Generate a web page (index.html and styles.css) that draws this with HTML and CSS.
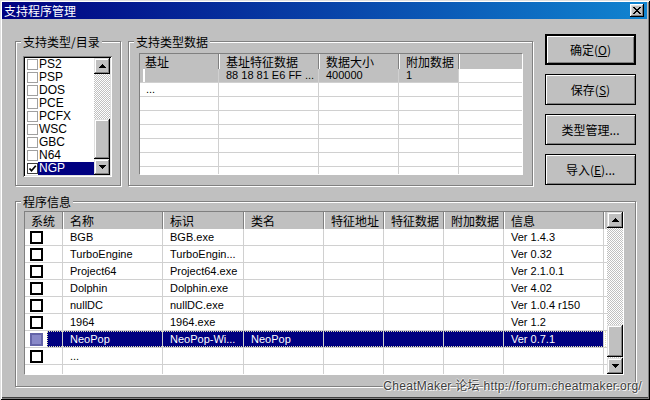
FILE: index.html
```html
<!DOCTYPE html>
<html lang="zh-CN">
<head>
<meta charset="utf-8">
<title>支持程序管理</title>
<link rel="stylesheet" href="styles.css">
</head>
<body>
<div class="window">
  <div class="titlebar">
    <span class="title">支持程序管理</span>
    <span class="close"><svg width="8" height="7" viewBox="0 0 8 7" shape-rendering="crispEdges"><path d="M0 0h2v1H0zM6 0h2v1H6zM1 1h2v1H1zM5 1h2v1H5zM2 2h4v1H2zM3 3h2v1H3zM2 4h4v1H2zM1 5h2v1H1zM5 5h2v1H5zM0 6h2v1H0zM6 6h2v1H6z" fill="#000"/></svg></span>
  </div>
  <div class="content">
    <div class="top">
      <div class="group g1">
        <span class="glabel">支持类型/目录</span>
        <div class="listbox">
          <div class="lb-items">
            <div class="lb-item"><span class="lb-cb"></span><span class="lb-text">PS2</span></div>
            <div class="lb-item"><span class="lb-cb"></span><span class="lb-text">PSP</span></div>
            <div class="lb-item"><span class="lb-cb"></span><span class="lb-text">DOS</span></div>
            <div class="lb-item"><span class="lb-cb"></span><span class="lb-text">PCE</span></div>
            <div class="lb-item"><span class="lb-cb"></span><span class="lb-text">PCFX</span></div>
            <div class="lb-item"><span class="lb-cb"></span><span class="lb-text">WSC</span></div>
            <div class="lb-item"><span class="lb-cb"></span><span class="lb-text">GBC</span></div>
            <div class="lb-item"><span class="lb-cb"></span><span class="lb-text">N64</span></div>
            <div class="lb-item sel"><span class="lb-cb checked"><svg width="9" height="9" viewBox="0 0 9 9"><polyline points="1.5,4.5 3.5,6.8 7.8,1.8" fill="none" stroke="#000" stroke-width="1.7"/></svg></span><span class="lb-text">NGP</span></div>
          </div>
          <div class="sb sb-lb">
            <div class="sb-btn"><svg width="7" height="4" viewBox="0 0 7 4" shape-rendering="crispEdges"><path d="M3 0h1v1h1v1h1v1h1v1H0V3h1V2h1V1h1z" fill="#000"/></svg></div>
            <div class="sb-track lb-track1"></div>
            <div class="sb-btn lb-thumb"></div>
            <div class="sb-btn"><svg width="7" height="4" viewBox="0 0 7 4" shape-rendering="crispEdges"><path d="M0 0h7v1H6v1H5v1H4v1H3V3H2V2H1V1H0z" fill="#000"/></svg></div>
          </div>
        </div>
      </div>
      <div class="group g2">
        <span class="glabel">支持类型数据</span>
        <div class="lv lv1">
          <div class="lv-head cols1">
            <div class="hcell">基址</div>
            <div class="hcell">基址特征数据</div>
            <div class="hcell">数据大小</div>
            <div class="hcell">附加数据</div>
            <div class="hcell filler"></div>
          </div>
          <div class="lv-row r1 cols1 gray">
            <div class="cell first"></div>
            <div class="cell">88 18 81 E6 FF ...</div>
            <div class="cell">400000</div>
            <div class="cell">1</div>
            <div class="cell filler"></div>
          </div>
          <div class="lv-row r1 cols1"><div class="cell">...</div><div class="cell"></div><div class="cell"></div><div class="cell"></div><div class="cell filler"></div></div>
          <div class="lv-row r1 cols1"><div class="cell"></div><div class="cell"></div><div class="cell"></div><div class="cell"></div><div class="cell filler"></div></div>
          <div class="lv-row r1 cols1"><div class="cell"></div><div class="cell"></div><div class="cell"></div><div class="cell"></div><div class="cell filler"></div></div>
          <div class="lv-row r1 cols1"><div class="cell"></div><div class="cell"></div><div class="cell"></div><div class="cell"></div><div class="cell filler"></div></div>
          <div class="lv-row r1 cols1"><div class="cell"></div><div class="cell"></div><div class="cell"></div><div class="cell"></div><div class="cell filler"></div></div>
          <div class="lv-row r1 cols1"><div class="cell"></div><div class="cell"></div><div class="cell"></div><div class="cell"></div><div class="cell filler"></div></div>
          <div class="lv-row r1 cols1"><div class="cell"></div><div class="cell"></div><div class="cell"></div><div class="cell"></div><div class="cell filler"></div></div>
        </div>
      </div>
      <div class="buttons">
        <div class="btn default">确定(<u>O</u>)</div>
        <div class="btn">保存(<u>S</u>)</div>
        <div class="btn">类型管理...</div>
        <div class="btn">导入(<u>E</u>)...</div>
      </div>
    </div>
    <div class="group g3">
      <span class="glabel">程序信息</span>
      <div class="lv lv3">
        <div class="lv-main">
          <div class="lv-head cols3">
            <div class="hcell">系统</div>
            <div class="hcell">名称</div>
            <div class="hcell">标识</div>
            <div class="hcell">类名</div>
            <div class="hcell">特征地址</div>
            <div class="hcell">特征数据</div>
            <div class="hcell">附加数据</div>
            <div class="hcell">信息</div>
            <div class="hcell filler"></div>
          </div>
          <div class="lv-row r3 cols3"><div class="cell c0"><span class="cb3"></span></div><div class="cell">BGB</div><div class="cell">BGB.exe</div><div class="cell"></div><div class="cell"></div><div class="cell"></div><div class="cell"></div><div class="cell">Ver 1.4.3</div><div class="cell filler"></div></div>
          <div class="lv-row r3 cols3"><div class="cell c0"><span class="cb3"></span></div><div class="cell">TurboEngine</div><div class="cell">TurboEngin...</div><div class="cell"></div><div class="cell"></div><div class="cell"></div><div class="cell"></div><div class="cell">Ver 0.32</div><div class="cell filler"></div></div>
          <div class="lv-row r3 cols3"><div class="cell c0"><span class="cb3"></span></div><div class="cell">Project64</div><div class="cell">Project64.exe</div><div class="cell"></div><div class="cell"></div><div class="cell"></div><div class="cell"></div><div class="cell">Ver 2.1.0.1</div><div class="cell filler"></div></div>
          <div class="lv-row r3 cols3"><div class="cell c0"><span class="cb3"></span></div><div class="cell">Dolphin</div><div class="cell">Dolphin.exe</div><div class="cell"></div><div class="cell"></div><div class="cell"></div><div class="cell"></div><div class="cell">Ver 4.02</div><div class="cell filler"></div></div>
          <div class="lv-row r3 cols3"><div class="cell c0"><span class="cb3"></span></div><div class="cell">nullDC</div><div class="cell">nullDC.exe</div><div class="cell"></div><div class="cell"></div><div class="cell"></div><div class="cell"></div><div class="cell">Ver 1.0.4 r150</div><div class="cell filler"></div></div>
          <div class="lv-row r3 cols3"><div class="cell c0"><span class="cb3"></span></div><div class="cell">1964</div><div class="cell">1964.exe</div><div class="cell"></div><div class="cell"></div><div class="cell"></div><div class="cell"></div><div class="cell">Ver 1.2</div><div class="cell filler"></div></div>
          <div class="lv-row r3 cols3 sel"><div class="cell c0"><span class="cb3"></span></div><div class="cell">NeoPop</div><div class="cell">NeoPop-Wi...</div><div class="cell">NeoPop</div><div class="cell"></div><div class="cell"></div><div class="cell"></div><div class="cell">Ver 0.7.1</div><div class="cell filler"></div></div>
          <div class="lv-row r3 cols3"><div class="cell c0"><span class="cb3"></span></div><div class="cell">...</div><div class="cell"></div><div class="cell"></div><div class="cell"></div><div class="cell"></div><div class="cell"></div><div class="cell"></div><div class="cell filler"></div></div>
          <div class="lv-row r3 cols3"><div class="cell c0"></div><div class="cell"></div><div class="cell"></div><div class="cell"></div><div class="cell"></div><div class="cell"></div><div class="cell"></div><div class="cell"></div><div class="cell filler"></div></div>
        </div>
        <div class="sb sb-lv">
          <div class="sb-btn"><svg width="7" height="4" viewBox="0 0 7 4" shape-rendering="crispEdges"><path d="M3 0h1v1h1v1h1v1h1v1H0V3h1V2h1V1h1z" fill="#000"/></svg></div>
          <div class="sb-track lv-track1"></div>
          <div class="sb-btn lv-thumb"></div>
          <div class="sb-track lv-track2"></div>
          <div class="sb-btn"><svg width="7" height="4" viewBox="0 0 7 4" shape-rendering="crispEdges"><path d="M0 0h7v1H6v1H5v1H4v1H3V3H2V2H1V1H0z" fill="#000"/></svg></div>
        </div>
      </div>
    </div>
  </div>
  <div class="watermark">CheatMaker 论坛 http://forum.cheatmaker.org/</div>
</div>
</body>
</html>
```
FILE: styles.css
```css
* { box-sizing: border-box; }
body {
  margin: 0;
  background: #c0c0c0;
  font-family: "Liberation Sans", "Noto Sans CJK SC", sans-serif;
  color: #000;
}
.window {
  position: relative;
  width: 650px;
  height: 400px;
  overflow: hidden;
  background: #c0c0c0;
  padding: 2px 3px 4px 2px;
  box-shadow: inset 1px 1px 0 #dfdfdf, inset -1px -1px 0 #000,
              inset 2px 2px 0 #fff, inset -2px -2px 0 #808080,
              inset 0 -3px 0 #404040;
}
.titlebar {
  height: 17px;
  display: flex;
  align-items: center;
  justify-content: space-between;
  padding: 0 3px 0 2px;
  background: linear-gradient(to right, #000080, #1084d0);
}
.title {
  color: #fff;
  font: 12px/17px "Noto Sans CJK SC", sans-serif;
}
.close {
  width: 14px;
  height: 13px;
  display: flex;
  align-items: center;
  justify-content: center;
  padding: 0 1px 1px 0;
  background: #c0c0c0;
  box-shadow: inset -1px -1px 0 #000, inset 1px 1px 0 #fff,
              inset -2px -2px 0 #808080, inset 2px 2px 0 #dfdfdf;
}
.close svg { display: block; }

.content { padding: 15px 0 0 13px; }
.top { display: flex; align-items: flex-start; }

.group {
  position: relative;
  border: 1px solid #808080;
  box-shadow: inset 1px 1px 0 #fff, 1px 1px 0 #fff;
}
.glabel {
  position: absolute;
  top: -7px;
  left: 5px;
  padding: 0 2px;
  background: #c0c0c0;
  font: 12px/13px "Noto Sans CJK SC", sans-serif;
  white-space: nowrap;
}
.g1 { width: 106px; height: 145px; margin-top: 7px; padding: 14px 0 0 7px; }
.g2 { width: 405px; height: 145px; margin: 7px 0 0 7px; padding: 11px 0 0 10px; }
.g3 { width: 621px; height: 186px; margin-top: 15px; padding: 9px 0 0 8px; }

/* list box */
.listbox {
  width: 89px;
  height: 121px;
  padding: 2px;
  display: flex;
  background: #fff;
  box-shadow: inset 1px 1px 0 #808080, inset -1px -1px 0 #fff,
              inset 2px 2px 0 #000, inset -2px -2px 0 #dfdfdf;
}
.lb-items { flex: 1; display: flex; flex-direction: column; }
.lb-item {
  height: 13px;
  display: flex;
  align-items: center;
  font: 12px/13px "Liberation Sans Narrow", "Liberation Sans", sans-serif;
}
.lb-cb {
  flex: none;
  width: 11px;
  height: 11px;
  margin-left: 2px;
  border: 1px solid #a0a0a0;
  background: #fff;
  display: flex;
  align-items: center;
  justify-content: center;
}
.lb-cb.checked { border-color: #404040; }
.lb-cb svg { display: block; }
.lb-text { flex: 1; height: 13px; padding-left: 1px; }
.lb-item.sel .lb-text { background: #000080; color: #fff; }

/* scrollbars */
.sb { width: 16px; flex: none; display: flex; flex-direction: column; }
.sb-btn {
  flex: none;
  height: 16px;
  display: flex;
  align-items: center;
  justify-content: center;
  background: #c0c0c0;
  box-shadow: inset -1px -1px 0 #000, inset 1px 1px 0 #dfdfdf,
              inset -2px -2px 0 #808080, inset 2px 2px 0 #fff;
}
.sb-btn svg { display: block; }
.sb-track {
  flex: none;
  background: repeating-conic-gradient(#c0c0c0 0 25%, #fff 0 50%) 0 0 / 2px 2px;
}
.sb-lb { height: 117px; }
.lb-track1 { height: 45px; }
.lb-thumb { height: 40px; }
.sb-lv { height: 162px; }
.lv-track1 { height: 97px; }
.lv-thumb { height: 32px; }
.lv-track2 { height: 1px; }

/* list views */
.lv {
  background: #fff;
  border: 1px solid;
  border-color: #808080 #fff #fff #808080;
  overflow: hidden;
}
.lv1 { width: 384px; height: 122px; }
.lv3 { width: 600px; height: 164px; display: flex; }
.lv-main { flex: 1; overflow: hidden; }
.cols1 { display: grid; grid-template-columns: 79px 100px 80px 60px 1fr; }
.cols3 { display: grid; grid-template-columns: 38px 100px 81px 80px 60px 60px 60px 100px 1fr; }

.lv-head { background: #c0c0c0; }
.lv1 .lv-head { height: 15px; }
.lv3 .lv-head { height: 17px; }
.hcell {
  font: 12px/15px "Noto Sans CJK SC", sans-serif;
  padding-left: 5px;
  border-right: 1px solid #808080;
  white-space: nowrap;
  overflow: hidden;
}
.lv3 .hcell { line-height: 17px; padding-left: 6px; }
.hcell + .hcell { padding-left: 7px; box-shadow: inset 1px 0 0 #fff; }
.hcell.filler { border-right: 0; }

.lv-row {
  border-bottom: 1px solid #d0d0d0;
  font: 11px/13px "Liberation Sans", "Noto Sans CJK SC", sans-serif;
}
.r1 { height: 14px; }
.r3 { height: 17px; line-height: 16px; }
.cell {
  padding-left: 7px;
  border-right: 1px solid #d0d0d0;
  white-space: nowrap;
  overflow: hidden;
}
.lv1 .cell:first-child { padding-left: 6px; }
.cell.filler { border-right: 0; }
.lv-row.gray .cell:not(.filler) { background: #c0c0c0; }
.lv-row.gray .cell.first {
  background: linear-gradient(to right, #c0c0c0 0 3px, #fff 3px 5px, #c0c0c0 5px);
}

.cell.c0 { padding-left: 5px; display: flex; align-items: center; }
.cb3 {
  width: 13px;
  height: 13px;
  border: 2px solid #000;
  background: #fff;
}
.lv-row.sel { position: relative; background: #000080; color: #fff; }
.lv-row.sel .cell.c0 { background: linear-gradient(to right, #fff 22px, transparent 22px); }
.lv-row.sel .cell.filler { background: #fff; }
.lv-row.sel .cb3 { background: #8888c8; border-color: #6464a8; }
.lv-row.sel::after {
  content: "";
  position: absolute;
  left: 22px;
  top: 0;
  width: 557px;
  bottom: 0;
  border: 1px dotted #e0e0b0;
}

/* buttons */
.buttons { margin-left: 12px; width: 91px; display: flex; flex-direction: column; gap: 9px; }
.btn {
  height: 31px;
  display: flex;
  align-items: center;
  justify-content: center;
  background: #c0c0c0;
  border: 1px solid #000;
  box-shadow: inset 1px 1px 0 #fff, inset -1px -1px 0 #808080;
  font: 12px/14px "Noto Sans CJK SC", sans-serif;
  white-space: nowrap;
}
.btn.default { border-width: 2px; }
.btn u { text-decoration-thickness: 1px; text-underline-offset: 1px; }

.watermark {
  position: absolute;
  right: 8px;
  top: 379px;
  font: 12px/14px "Liberation Sans", "Noto Sans CJK SC", sans-serif;
  letter-spacing: 0.3px;
  color: #3c3c3c;
  text-shadow: 1px 1px 0 #f4f4f4, -1px 0 0 #e8e8e8, 0 -1px 0 #e8e8e8;
  white-space: nowrap;
}
```
